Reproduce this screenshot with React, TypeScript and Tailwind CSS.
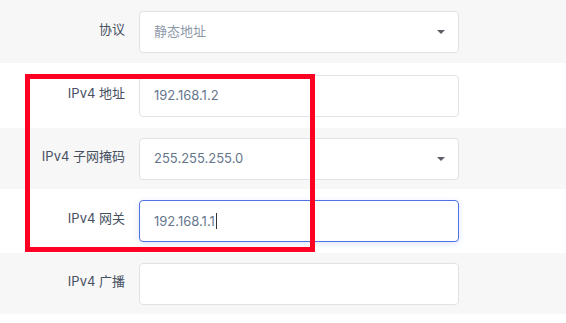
type Field = {
  label: string;
  value: string;
  select?: boolean;
  muted?: boolean;
  focused?: boolean;
  shade: boolean;
  h: string;
};

const fields: Field[] = [
  { label: '协议', value: '静态地址', select: true, muted: true, shade: true, h: 'h-[63px]' },
  { label: 'IPv4 地址', value: '192.168.1.2', shade: false, h: 'h-[65px]' },
  { label: 'IPv4 子网掩码', value: '255.255.255.0', select: true, shade: true, h: 'h-[61px]' },
  { label: 'IPv4 网关', value: '192.168.1.1', focused: true, shade: false, h: 'h-[64px]' },
  { label: 'IPv4 广播', value: '', shade: true, h: 'h-[61px]' },
];

const Row = ({ f }: { f: Field }) => (
  <div className={`flex items-center ${f.h} ${f.shade ? 'bg-[#f7f7f8]' : 'bg-white'}`}>
    <div className="w-[126px] -translate-y-[2px] pr-[1px] text-right text-[13px] text-[#46505f]">{f.label}</div>
    <div
      className={`ml-[13px] flex h-[42px] w-[320px] items-center rounded-[4px] border bg-white pl-[14px] pr-[13px] ${
        f.focused ? 'border-[#4f72e3] shadow-[0_2px_6px_rgba(79,114,227,0.18)]' : 'border-[#dfe3e8]'
      }`}
    >
      <span className={`flex-1 text-[13px] ${f.muted ? 'text-[#8e99a8]' : 'text-[#66768c]'}`}>
        {f.value}
        {f.focused && <span className="ml-[1px] inline-block h-[16px] w-[1px] translate-y-[3px] bg-[#333]" />}
      </span>
      {f.select && <span className="h-0 w-0 border-x-[4px] border-t-[4px] border-x-transparent border-t-[#5a5f66]" />}
    </div>
  </div>
);

export default function App() {
  return (
    <div
      className="relative h-[323px] w-[566px] overflow-hidden bg-white"
      style={{ fontFamily: 'Inter, "Noto Sans CJK SC", sans-serif' }}
    >
      {fields.map((f) => (
        <Row key={f.label} f={f} />
      ))}
      {/* red annotation box */}
      <div className="absolute left-[25px] top-[74px] h-[178px] w-[290px] border-[5px] border-[#fe0022]" />
    </div>
  );
}
